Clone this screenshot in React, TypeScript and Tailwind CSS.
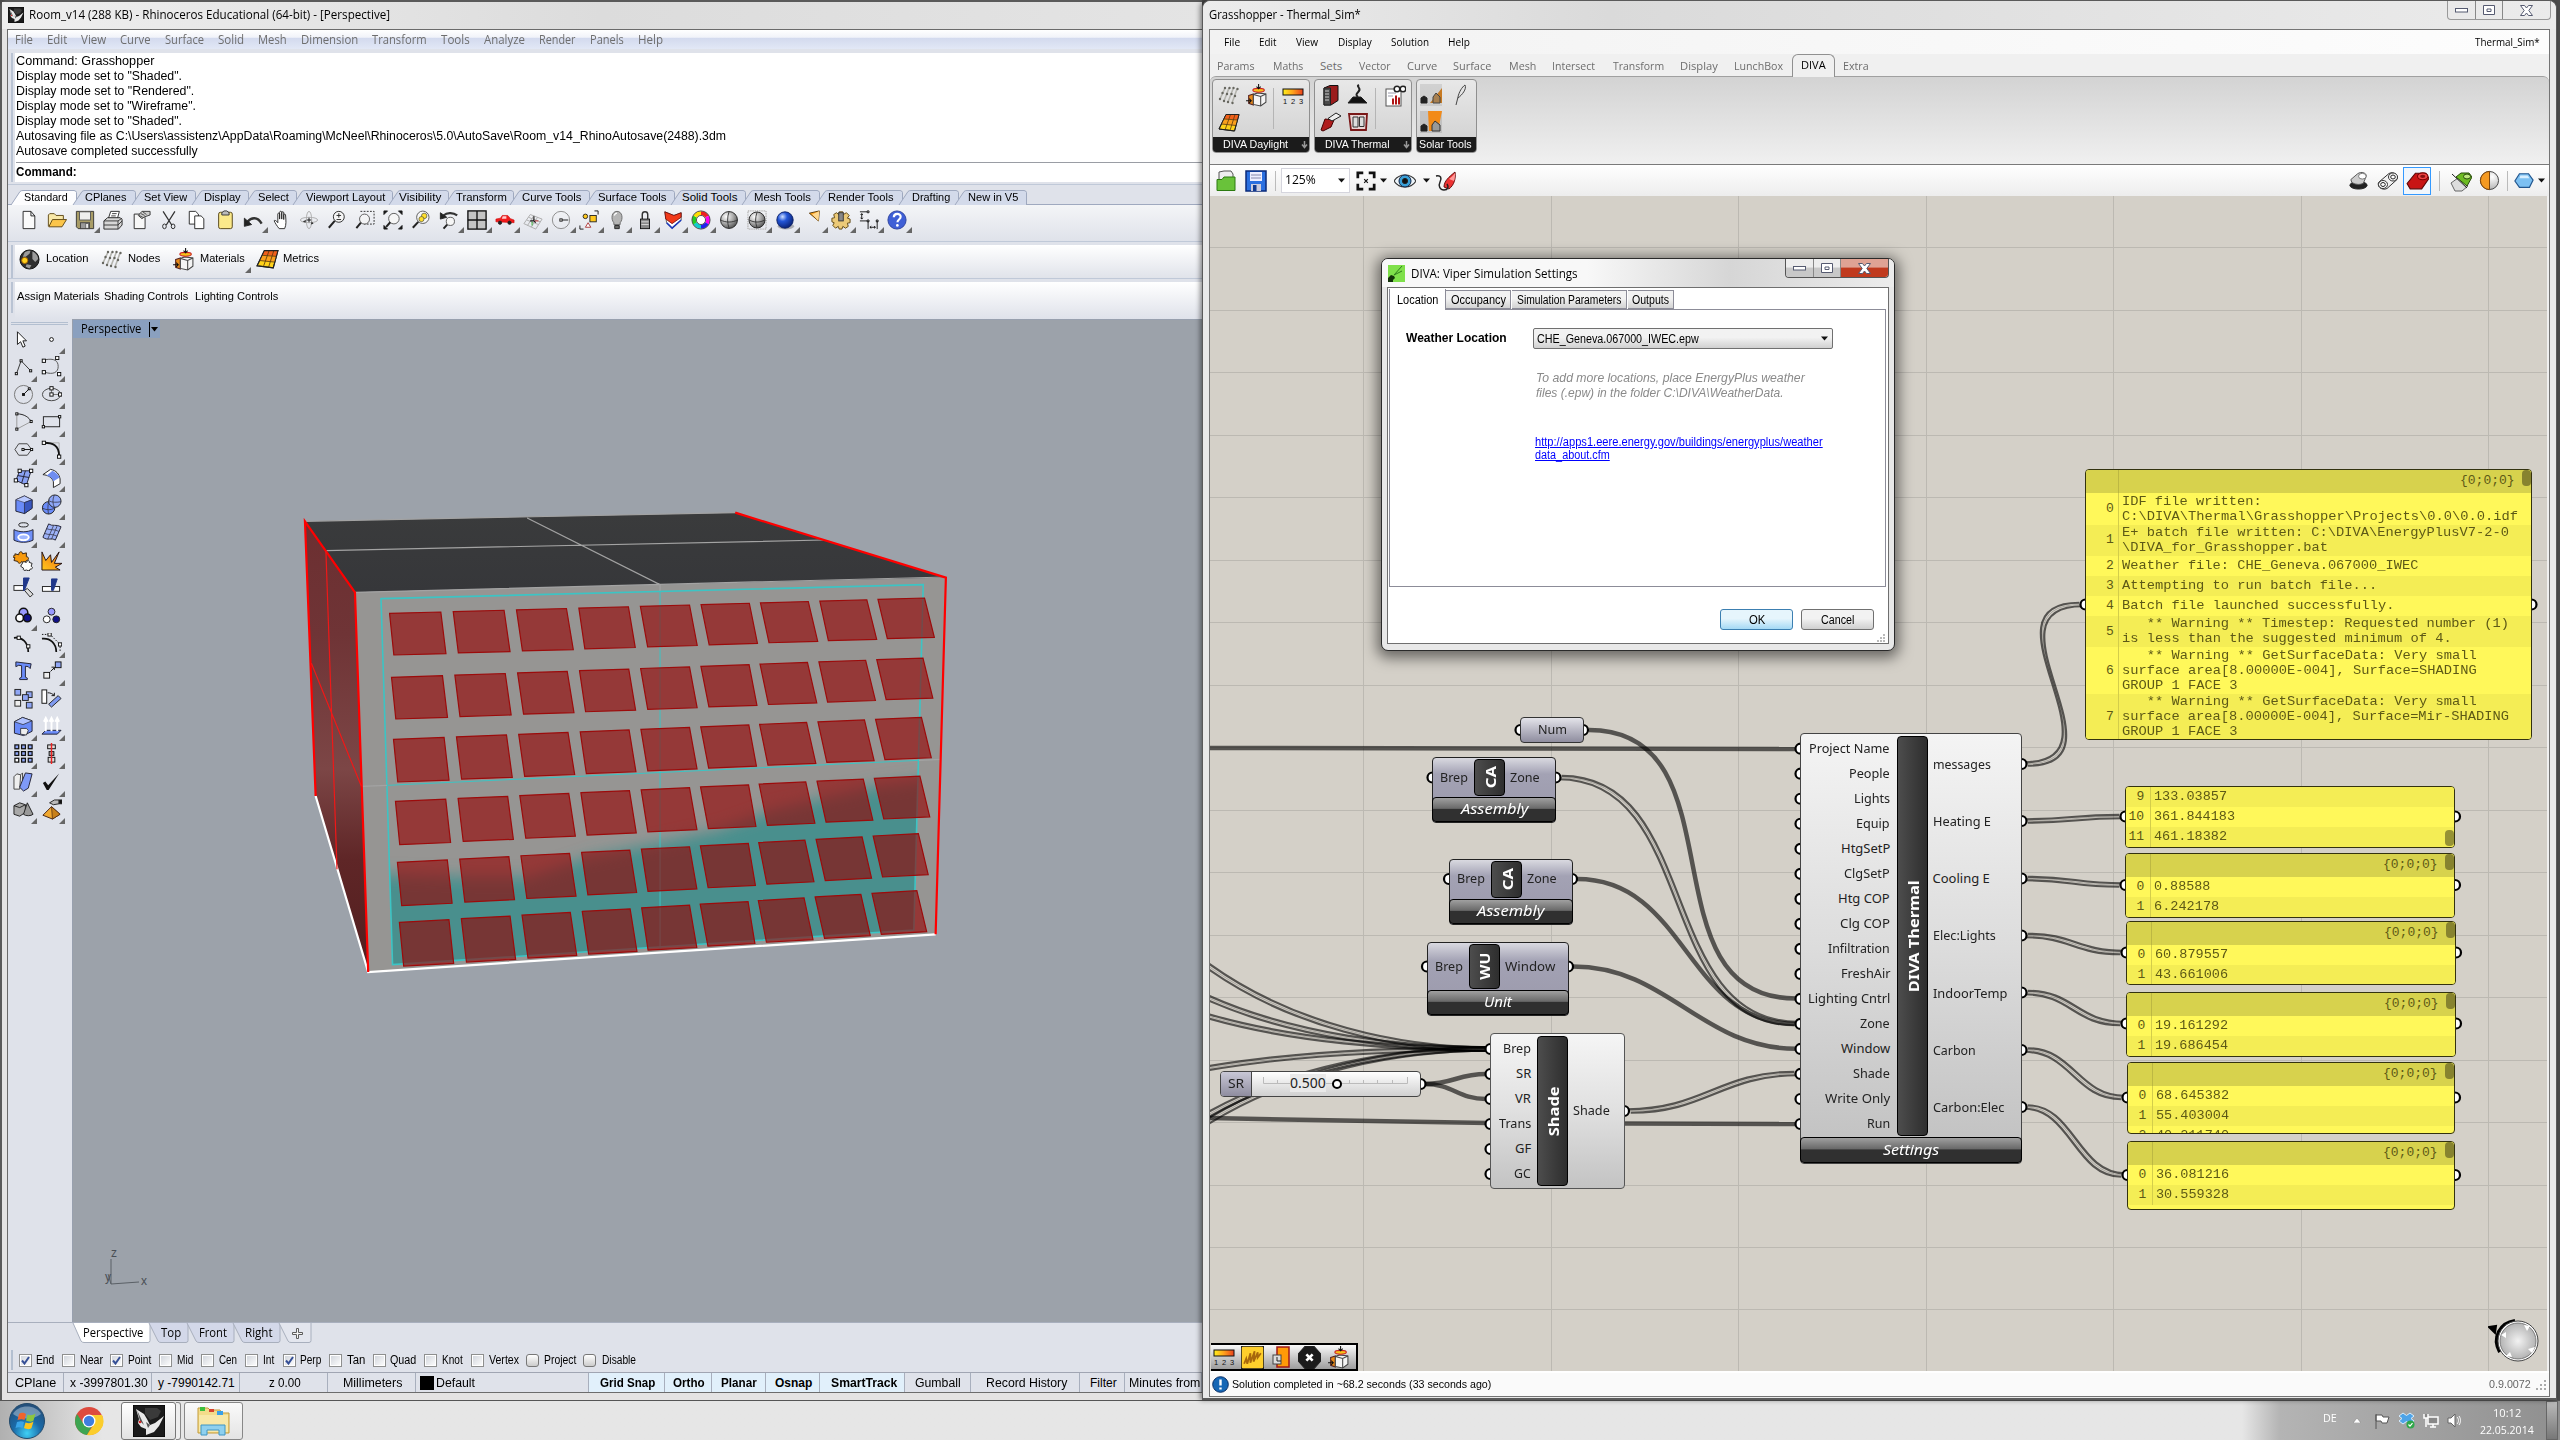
import React, { useLayoutEffect, useRef, useState } from "react";

const SANS = "font-['Liberation_Sans',sans-serif]";
const UI = "font-['Open_Sans','Noto_Sans',sans-serif]";
const NODE = "font-['Noto_Sans',sans-serif]";
const MONO = "font-['Liberation_Mono',monospace]";

/* Text fitted to a given advance width. */
function T({ w, children, className = "" }: { w: number; children: React.ReactNode; className?: string }) {
  const ref = useRef<HTMLSpanElement>(null);
  const [s, setS] = useState(1);
  useLayoutEffect(() => {
    if (ref.current) {
      const n = ref.current.offsetWidth;
      if (n > 0) setS(w / n);
    }
  }, [w]);
  return (
    <span className={"inline-block shrink-0 whitespace-pre text-left " + className} style={{ width: w }}>
      <span ref={ref} className="inline-block origin-left whitespace-pre" style={{ transform: `scaleX(${s})` }}>
        {children}
      </span>
    </span>
  );
}

type Item = [string, number, number];

/* A row of labels; each entry is [label, start, end]. */
function Labels({ items, from, className = "", itemClass = "" }: { items: Item[]; from: number; className?: string; itemClass?: string }) {
  return (
    <div className={"flex items-center " + className}>
      {items.map(([t, a, b], i) => (
        <span key={i} className={"flex shrink-0 " + itemClass} style={{ marginLeft: a - (i ? items[i - 1][2] : from) }}>
          <T w={b - a}>{t}</T>
        </span>
      ))}
    </div>
  );
}

function Ico({ n, s = 22, flyout = false, className = "" }: { n: string; s?: number; flyout?: boolean; className?: string }) {
  return (
    <span className={"relative flex shrink-0 items-center justify-center " + className}>
      <svg width={s} height={s} viewBox="0 0 22 22" fill="none" stroke="#222" strokeWidth="1">
        {G[n]}
      </svg>
      {flyout && (
        <svg className="absolute -bottom-[2px] right-0" width="6" height="6" viewBox="0 0 6 6">
          <path d="M6 0V6H0Z" fill="#666" />
        </svg>
      )}
    </span>
  );
}

const sq = (x: number, y: number, f = "#fff", s = 3.4) => <rect x={x - s / 2} y={y - s / 2} width={s} height={s} fill={f} stroke="#111" />;

const G: Record<string, React.ReactNode> = {
  doc: <path d="M3.500 1.500h10l5 5v14h-15zM13.500 1.500v5h5" fill="#fafafa" stroke="#111" transform="translate(1.500 0) scale(.86 1)" />,
  open: (
    <>
      <path d="M1.500 18V5.500L3 4h5l2 2h8v4" fill="#f8e8a8" stroke="#5b4310" />
      <path d="M2 18.500 6 10.500h15.500l-5 8z" fill="#fbc54a" stroke="#5b4310" />
    </>
  ),
  save: (
    <>
      <path d="M1.500 1.500h19v19h-17l-2-2z" fill="#a89c66" stroke="#333" />
      <rect x="5" y="2" width="12" height="9" fill="#eee" stroke="#555" />
      <rect x="6" y="14" width="10" height="6.500" fill="#999" stroke="#444" />
      <rect x="12" y="15" width="2.500" height="5" fill="#fff" stroke="#333" strokeWidth=".6" />
    </>
  ),
  print: (
    <>
      <path d="M6 9 8.500 1.500h9.500L16 9z" fill="#fff" />
      <path d="M1 12 5 8.500h14l2 2v6l-4 4.500H1z" fill="#d6d6d6" />
      <path d="M1 12h15.500L21 9M1 16.500h15.500L21 12M16.500 12v9M10 4h5M9 6.500h5" stroke="#333" />
    </>
  ),
  props: (
    <>
      <path d="M3.500 4.500h8l4 4v12h-12z" fill="#f7f7f7" />
      <path d="M8 6 12 1.500h9v4l-6 2-3 2z" fill="#ccc" stroke="#333" />
      <path d="M9 6l4 2M11 4l4 2M13 2l4 3" stroke="#444" />
    </>
  ),
  cut: (
    <>
      <path d="M4.500 1.500 14 16.500M17.500 1.500 8 16.500" stroke="#333" strokeWidth="1.400" />
      <ellipse cx="6" cy="18" rx="2" ry="2.600" />
      <ellipse cx="15.500" cy="18" rx="2" ry="2.600" />
    </>
  ),
  copy: (
    <>
      <path d="M2.500 1.500h7l3 3v11h-10z" fill="#fff" />
      <path d="M8.500 6.500h7l3 3v11h-10z" fill="#fff" />
    </>
  ),
  paste: (
    <>
      <rect x="4" y="2.500" width="15" height="18" rx="2" fill="#fbe98a" stroke="#4d3d10" />
      <path d="M7.500 5.500V3L10 1h3l2.500 2v2.500z" fill="#bbb" stroke="#333" />
    </>
  ),
  undo: (
    <>
      <path d="M5 13c4-5 11-6 15.500 2" fill="none" stroke="#333" strokeWidth="2.600" />
      <path d="M1.500 9v9l8-2z" fill="#222" />
    </>
  ),
  hand: (
    <path
      d="M7 20.500C4 17 2.500 14 1.500 12c0-1 2-1 4 2V4.500c0-1.500 2-1.500 2 0V10 2.500c0-1.500 2.300-1.500 2.300 0V10 3c0-1.500 2.200-1.500 2.200 0v7.500V5.500c0-1.300 2-1.300 2 0C14.500 12 15 16 13 20.500z"
      fill="#fff"
      transform="translate(2 0)"
    />
  ),
  rot: (
    <>
      <ellipse cx="11" cy="11" rx="9.500" ry="3" stroke="#aaa" />
      <ellipse cx="11" cy="11" rx="3" ry="9.500" stroke="#aaa" />
      <path d="M11 8.500v5M8.500 11h5" stroke="#111" />
      <path d="M7 14l-3-1.500L8 11zM13 16l3-1-2-2.500z" fill="#333" stroke="none" />
    </>
  ),
  zoom: (
    <>
      <circle cx="13" cy="7.500" r="6" fill="#f6f6f6" />
      <path d="M8.500 12 2 19.500" strokeWidth="2.200" />
      <path d="M10.500 6h5M13 3.500v5M10.500 10.500h5" />
    </>
  ),
  zoomw: (
    <>
      <path d="M6 1.500h15v14H10" strokeDasharray="2 1.500" />
      <circle cx="10.500" cy="10" r="5.500" fill="#f6f6f6" fillOpacity=".7" stroke="#555" />
      <path d="M6.500 14 1.500 20" strokeWidth="2.200" />
    </>
  ),
  zoome: (
    <>
      <path d="M1 1h4L1 5zM21 1h-4l4 4zM1 21h4l-4-4zM21 21h-4l4-4z" fill="#111" />
      <circle cx="12" cy="9.500" r="5.800" fill="#f6f6f6" stroke="#555" />
      <path d="M8 13.500 3.500 18.500" strokeWidth="2.200" />
    </>
  ),
  zooms: (
    <>
      <circle cx="13" cy="8" r="6.800" fill="#f6f6f6" stroke="#555" />
      <circle cx="14.500" cy="6.500" r="3" fill="#ffdf2c" stroke="#554" strokeWidth=".8" />
      <circle cx="11.500" cy="10" r="2.800" fill="#ffdf2c" stroke="#554" strokeWidth=".8" />
      <path d="M8 13 2 19.500" strokeWidth="2.200" />
    </>
  ),
  zoomu: (
    <>
      <path d="M5 6c4-4 11-3 15 0" stroke="#333" strokeWidth="2.400" />
      <path d="M1.500 3v7l7-2z" fill="#222" />
      <circle cx="12.500" cy="12.500" r="4.500" fill="#f6f6f6" stroke="#555" />
      <path d="M9 16 5 20.500" strokeWidth="2.200" />
    </>
  ),
  four: (
    <>
      <rect x="1" y="1" width="20" height="20" fill="#c4c4c4" stroke="#111" strokeWidth="1.500" />
      <path d="M11 1v20M1 11h20" stroke="#111" strokeWidth="1.500" />
    </>
  ),
  car: (
    <>
      <path d="M1 13V10l5-1 2-3h6l3 3.500 4 1.500v3z" fill="#f01c1c" stroke="#c00" strokeWidth=".6" />
      <path d="M8.500 7h4v2.500h-5z" fill="#fcc" stroke="none" />
      <circle cx="5.500" cy="14" r="1.800" fill="#222" />
      <circle cx="16" cy="14" r="1.800" fill="#222" />
    </>
  ),
  grid: (
    <>
      <path d="M1 15 8 5l13 5-7 11zM4 11l13 5M6 8l13 5M5 17 12 6M9 19l7-11" stroke="#aaa" />
      <path d="M8 12h4v-5M12 12l2 2" stroke="#111" strokeWidth="1.200" />
      <path d="M13 12h4" stroke="#b22" />
      <path d="M10 13v4" stroke="#2a2" />
    </>
  ),
  circ: (
    <>
      <circle cx="11" cy="11" r="9.500" stroke="#888" />
      <path d="M11 11h8" stroke="#111" />
      {sq(11, 11, "#fff", 2.500)}
    </>
  ),
  selobj: (
    <>
      <path d="M17 1h4v4M5 21H1v-4" stroke="#111" />
      <rect x="12" y="6" width="7" height="7" fill="#ffc81c" />
      <circle cx="7" cy="7" r="2.500" fill="#ffc81c" />
      <path d="M10 14l3 5H7z" fill="#fff" stroke="#a33" />
    </>
  ),
  bulb: (
    <>
      <path d="M7.500 14C4 10 5 1.500 11 1.500S18 10 14.500 14v2h-7z" fill="#b5b5b5" stroke="#666" />
      <path d="M8.500 17h5v3.500h-5z" fill="#666" />
      <path d="M8 6c.5-1.500 1.500-2.500 3-2.500" stroke="#fff" strokeWidth="1.500" />
    </>
  ),
  lock: (
    <>
      <path d="M8 10V5c0-4 6-4 6 0v5" stroke="#333" strokeWidth="1.600" />
      <rect x="6" y="10" width="10" height="10.500" fill="#888" stroke="#111" />
      <path d="M7 13h8M7 16h8" stroke="#ddd" />
    </>
  ),
  layer: (
    <>
      <path d="M2 2 12 6l8-3v8L10 20 4 14z" fill="#fff" stroke="#333" strokeWidth=".8" />
      <path d="M2 2 12 6l8-3v5l-10 7-7-5z" fill="#f03a1a" stroke="#600" strokeWidth=".8" />
      <path d="M4 14l6 6 10-9" stroke="#1b39b7" strokeWidth="1.800" />
    </>
  ),
  wheel: (
    <g fill="none" strokeWidth="4.500">
      <path d="M11 3.500A7.500 7.500 0 0 1 17.500 7.200" stroke="#e22" />
      <path d="M17.500 7.200a7.500 7.500 0 0 1 0 7.500" stroke="#f0e" />
      <path d="M17.500 14.700A7.500 7.500 0 0 1 11 18.500" stroke="#22e" />
      <path d="M11 18.500a7.500 7.500 0 0 1-6.500-3.800" stroke="#1cc" />
      <path d="M4.500 14.700a7.500 7.500 0 0 1 0-7.500" stroke="#2c2" />
      <path d="M4.500 7.200A7.500 7.500 0 0 1 11 3.500" stroke="#fd0" />
      <circle cx="11" cy="11" r="10" stroke="#444" strokeWidth="1" />
      <circle cx="11" cy="11" r="5" stroke="#444" strokeWidth="1" fill="#fff" />
    </g>
  ),
  ball: (
    <>
      <circle cx="11" cy="11" r="9.300" fill="url(#gBall)" stroke="#222" />
      <path d="M2 11c5 3 13 3 18 0M11 2c-2 6-2 12 0 18" stroke="#333" />
    </>
  ),
  balld: (
    <>
      <path d="M1 1h20v20H1z" stroke="#bbb" strokeDasharray="1 1" strokeWidth="2" />
      <circle cx="11" cy="11" r="8.800" fill="url(#gBall)" stroke="#222" />
      <path d="M2.500 11c5 3 12 3 17 0M11 2.500c-2 6-2 11 0 17" stroke="#333" />
    </>
  ),
  blue: (
    <>
      <ellipse cx="12" cy="18" rx="9" ry="3.500" fill="#000" fillOpacity=".25" stroke="none" />
      <circle cx="11" cy="11" r="9" fill="url(#gBlue)" stroke="#0a1f66" />
    </>
  ),
  cone: (
    <>
      <path d="M7 3.500 18 1l-1 11z" fill="#ffa41c" stroke="#503000" />
      <path d="M18 1 10 5l7 7" fill="#ffd890" stroke="none" />
    </>
  ),
  gear: (
    <>
      <path d="M9 2h4l.5 3L17 3l3 3-2 3 3 1v4l-3 .5 1 3.500-3 2-3-2-1 3H9l-1-3-3 2-3-3 1.500-3L1 13V9l3-.5L3 5l3-2 2.500 2z" fill="#ecca78" stroke="#5b420c" />
      <rect x="8.500" y="3" width="5" height="9" fill="#888" stroke="#333" />
    </>
  ),
  dims: (
    <path d="M1 2h8M1 12h8M3 4v6M1.800 5.500 3 4l1.200 1.500M1.800 8.500 3 10l1.200-1.500M10 12v9M20 12v9M12 19h6M13.500 17.800 12 19l1.500 1.200M16.500 17.800 18 19l-1.500 1.200M9 1h2v2H9zM9 11h2v2H9zM19 11h2v2h-2z" stroke="#111" />
  ),
  help: (
    <>
      <circle cx="11" cy="11" r="10" fill="#3f5fd6" stroke="#2a3f9c" />
      <path d="M7.500 8c0-5 7.500-5 7.500-.5 0 3-3.500 3-3.500 6" stroke="#fff" strokeWidth="2.400" />
      <circle cx="11.400" cy="17" r="1.500" fill="#fff" stroke="none" />
    </>
  ),
  globe: (
    <>
      <circle cx="11" cy="11" r="10" fill="#2f2f2f" stroke="#111" />
      <path d="M6 3.500C8 2 10 1.500 12 2l-1 3-4 3-3 0zM14 2.500c4 1.500 6 5 6 8l-3 3-3-3 0-4zM8 16l5 1-2 3.500-4-2z" fill="#9b9b9b" stroke="none" />
      <circle cx="6" cy="12" r="3.200" fill="#ffd21c" stroke="#a60" />
    </>
  ),
  nodes: (
    <>
      <path d="M2 15 7 4M6 17l5-13M10 18l5-13M14 19l5-14" stroke="#b4b4ae" strokeWidth="1.600" />
      <g fill="#66665f" stroke="none">
        <circle cx="7" cy="4" r="1.200" /><circle cx="11.500" cy="4" r="1.200" /><circle cx="15.500" cy="4" r="1.200" /><circle cx="19.500" cy="5" r="1.200" />
        <circle cx="4.500" cy="9" r="1.200" /><circle cx="9" cy="10" r="1.200" /><circle cx="13.500" cy="10" r="1.200" /><circle cx="17" cy="12" r="1.200" />
        <circle cx="2" cy="15" r="1.200" /><circle cx="6" cy="17" r="1.200" /><circle cx="10" cy="18" r="1.200" /><circle cx="14.500" cy="19" r="1.200" />
      </g>
    </>
  ),
  mat: (
    <>
      <path d="M3.500 11 8 9.500V20l-4.500-1.500z" fill="#e88a1a" stroke="#522" />
      <path d="M8 10l4-1.500 8 1v8L15 21l-7-1.500z" fill="#f4f4f4" stroke="#444" />
      <path d="M8 10l7 2 5-2.500M15 12v9" stroke="#444" />
      <ellipse cx="13" cy="6" rx="5.500" ry="1.800" fill="#f5c21a" stroke="#c22" />
      <path d="M13 0v5M11 2.500l2 2 2-2M1 16h5M4 14l2 2-2 2" stroke="#111" />
    </>
  ),
  met: (
    <>
      <path d="M8 2.500h13L16.500 19 1 17z" fill="#ffd21a" stroke="#222" />
      <path d="M8 2.500h13L19.500 8 6 7z" fill="#f2601a" stroke="none" />
      <path d="M6 7l13.500 1-1.500 5.500L3.500 12z" fill="#fba01c" stroke="none" />
      <path d="M6 7l13.500 1M3.500 12l14.500 1.500M12.500 2.500 7 18M17 2.500 12 18.500" stroke="#5a3a10" strokeWidth=".8" />
      <path d="M8 2.500h13L16.500 19 1 17z" stroke="#222" />
    </>
  ),
  arrow: <path d="M7 2v14l3.500-3 2.500 6 2.500-1.200L13 12h4z" fill="#fff" stroke="#111" transform="translate(-2 1) scale(.95)" />,
  pt: <circle cx="11" cy="11" r="2" fill="#fff" stroke="#111" />,
  poly: <>
    <path d="M3.500 19 8.500 5l10 10.500" stroke="#333" />{sq(3.500, 18.500, "#fff", 2.200)}{sq(8.500, 5, "#fff", 2.200)}{sq(18.500, 15.500, "#fff", 2.200)}
  </>,
  crv: <><path d="M4 4c10-2 14 1 14 7s-5 9-14 6" stroke="#555" />{sq(3, 5)}{sq(17, 2)}{sq(3, 17)}{sq(19, 19)}</>,
  cir2: <><circle cx="11" cy="11" r="9.500" stroke="#777" /><path d="M11 11l6-6" stroke="#111" />{sq(11, 11, "#fff", 2)}{sq(17, 5, "#fff", 2)}</>,
  ell: <><ellipse cx="11" cy="11" rx="9.500" ry="6.500" stroke="#444" /><path d="M11 4.500V11h9" stroke="#777" />{sq(11, 11)}{sq(11, 4.500)}{sq(20, 11)}</>,
  arc: <><path d="M4 3v16M4 19l15-8" stroke="#999" /><path d="M4 3c8 0 13 4 15 8" stroke="#222" />{sq(4, 3, "#fff", 2.200)}{sq(4, 19, "#fff", 2.200)}{sq(19, 11, "#fff", 2.200)}</>,
  rect: <><rect x="2.500" y="6" width="17" height="10.500" stroke="#222" />{sq(2.500, 16.500, "#fff", 2.400)}{sq(19.500, 6, "#fff", 2.400)}</>,
  hex: <><path d="M6 5h9l4.500 6-4.500 6H6L2 11z" stroke="#444" /><path d="M10.500 11h9" stroke="#111" />{sq(10.500, 11, "#fff", 2.200)}{sq(19.500, 11, "#fff", 2.200)}</>,
  fil: <><path d="M4 4h15v14" stroke="#aaa" /><path d="M3 4c9 0 16 2 16 14" stroke="#111" strokeWidth="2" />{sq(3, 4)}{sq(19, 18.500)}</>,
  srf: <><path d="M7 4h12l-5 15L3 14z" fill="#8aa2f5" stroke="#223" /><path d="M13 4l-4 13M5 9l12 2" stroke="#223" />{sq(7, 4)}{sq(19, 4)}{sq(3, 14)}{sq(14, 19)}</>,
  sweep: <><path d="M2 8 10 2.500c6 1 9 5 10 10v5l-7 4v-6c-1-4-5-7-11-7.500z" fill="#fff" /><path d="M6 9l6-5c4 2 6 4 7.500 7L13 15c-1-3-3-5-7-6z" fill="#6f8df0" stroke="none" /></>,
  box: <><path d="M3 6 12 2l8 4v9l-8 5.500L3 18z" fill="#6a8bf8" stroke="#223" /><path d="M3 6l9 3 8-3-8-4z" fill="#b9c9ff" stroke="#445" strokeWidth=".7" /><path d="M12 9v11.500l8-5.500V6z" fill="#3a57c0" stroke="#223" strokeWidth=".7" /></>,
  sph2: <><circle cx="8" cy="14.500" r="6.500" fill="#6a8bf8" /><circle cx="14.500" cy="7.500" r="6.500" fill="#8fa8f8" /><path d="M8 7c3 2 9 2 13 1M14 1c-2 4-2 9 0 13M2 15c4 2 8 2 12 0M8 8c-1 4-1 9 0 13" stroke="#334" strokeWidth=".8" /></>,
  ring: <><ellipse cx="11" cy="3" rx="5" ry="2.200" /><path d="M1 8c6 3 14 3 20 0v11c-6 3-14 3-20 0z" fill="#7090f8" stroke="#223" /><ellipse cx="11" cy="16" rx="5.500" ry="3" fill="#9fb6ff" stroke="#fff" strokeWidth="2" /></>,
  patch: <><path d="M8 2c4 3 8 0 13 3l-6 14c-4-3-8 1-13-3z" fill="#9db2f8" stroke="#223" /><path d="M6 7c4 2 8 0 13 3M4 12c4 2 8 0 13 3M13 4 7 18M17 4l-6 14" stroke="#334" strokeWidth=".8" /></>,
  puz: <><path d="M2 4l4 1c0-4 4-4 4-1l4-1v4c3 0 3 4 0 4l-2 3-3-2c-1 3-4 2-4 0l-4-1 1-3C-1 8-1 6 2 6z" fill="#f79a0e" stroke="#321" /><path d="M11 12l3 1c1-3 4-2 3 0l3 1-1 3c2 1 2 3-1 3l-1 2-3-1c-2 1-4 0-3-2l-3-2z" fill="#fff" /></>,
  boom: <path d="M1 21V2l4 9L10 5l1 8 8-11-5 12 8 0-7 4 5 3z" fill="url(#gBoom)" stroke="#211" />,
  trim: <><rect x="1" y="9" width="10" height="5" fill="#fff" /><path d="M12 14l6 7 3-3-6-6z" fill="#ddd" /><path d="M11 1h6l-5 13h-1z" fill="#20378a" stroke="#20378a" /></>,
  split: <><rect x="1.500" y="10" width="18" height="5" fill="#fff" /><path d="M11 2h6l-4 12h-2z" fill="#20378a" stroke="#20378a" /></>,
  grp: <><circle cx="11" cy="8" r="4.500" fill="#99f" stroke="#111" strokeWidth="1.600" /><circle cx="7" cy="13.500" r="4" fill="#fff" stroke="#111" strokeWidth="1.600" /><circle cx="15" cy="13.500" r="4" fill="#118" stroke="#111" strokeWidth="1.600" /></>,
  ungrp: <><circle cx="11" cy="7" r="3.600" fill="#99f" /><circle cx="6" cy="15" r="3.600" fill="#fff" /><circle cx="16" cy="15" r="3.600" fill="#118" /></>,
  pedit: <><path d="M1 5c8-1 15 4 15 15" stroke="#111" strokeWidth="1.800" />{sq(6, 5)}{sq(16, 14)}</>,
  pcp: <><path d="M1 6c9-1 15 5 15 14" stroke="#111" strokeWidth="1.800" /><path d="M1 1.500h8M11 3l9 9v8" strokeDasharray="1.500 1.500" stroke="#111" />{sq(9, 1.500)}{sq(20, 12)}</>,
  text: <path d="M3 2l16 2-1 5-2-2-3-.5V18l2 1v1.500H7V19l2-1V6L6 5.500 3 7z" fill="#6a8bf8" stroke="#223" />,
  move: <><rect x="3" y="13" width="6" height="6" fill="#eee" stroke="#111" /><rect x="15" y="2" width="6" height="6" fill="#8fa6f5" stroke="#111" /><path d="M10 12l4-4M11 7.500h3v3" stroke="#111" /></>,
  arr: <><rect x="2" y="1.500" width="6" height="6" fill="#8fa6f5" /><rect x="14" y="4" width="6" height="6" fill="#8fa6f5" /><rect x="10" y="7" width="6" height="6" fill="#8fa6f5" /><rect x="2" y="13" width="6" height="6" fill="#eee" /><rect x="14" y="15" width="6" height="6" fill="#8fa6f5" /></>,
  rota: <><rect x="1" y="2" width="5" height="14" fill="#fff" stroke="#111" /><path d="M8 17 18 8l3 3-10 9z" fill="#7f9af0" /><path d="M7 5c3 0 5 1 7 3M11 8h3V5" stroke="#111" /></>,
  cage: <><path d="M1.500 6 10 1.500 20 5v11l-9 4.500L1.500 18z" fill="#6a8bf8" stroke="#223" /><path d="M1.500 6l9 3L20 5 10 1.500z" fill="#b0c2ff" strokeWidth=".7" /><path d="M8 13h6l2 2-2 5-6-1z" fill="#eee" strokeWidth=".8" /></>,
  ext: <><path d="M5 15h16l-4 4H1z" fill="#6a8bf8" stroke="#223" /><path d="M5 16V4M11 16V4M17 16V4M3 6l2-4 2 4M9 6l2-4 2 4M15 6l2-4 2 4" stroke="#fff" strokeWidth="2" /></>,
  arr9: <g stroke="#111" strokeWidth="1.300">{[2, 9, 16].map((x) => [2, 9, 16].map((y) => <rect key={x + "-" + y} x={x} y={y} width="4" height="4" fill={x === 2 && y === 16 ? "#fff" : "#8fa6f5"} />))}</g>,
  align: <><rect x="7" y="2" width="8" height="4" fill="#ddd" stroke="#111" /><rect x="8.500" y="9" width="5" height="4" fill="#aaa" stroke="#111" /><rect x="7.500" y="15" width="7" height="5" fill="#ddd" stroke="#111" /><path d="M11 0v22" stroke="#e22" strokeWidth="1.500" /></>,
  flow: <><path d="M1 6l3-3 4 1-1 15-6 0zM8 4l2-2v8" fill="#eee" stroke="#444" /><path d="M7 17 13 2l7 1-4 15-5 3z" fill="#7f9af8" stroke="#223" /></>,
  check: <path d="M2 12.500 4.500 11 7.500 15 19 2.500 8 20H6z" fill="#111" stroke="none" />,
  prim: <><path d="M1 7l6-3 6 2v8l-6 4-6-2z" fill="#a8a8a8" /><path d="M1 7l6 2 6-3" /><path d="M15 4l6 12c-2 2-8 2-10 0z" fill="#999" /></>,
  pyr: <><path d="M2 17 11 8l9 8-8 5z" fill="#f0a830" stroke="#421" /><path d="M11 8l1 13 8-5z" fill="#c8801a" stroke="#421" strokeWidth=".7" /><path d="M9 4l5-3 5 0v4l-6 1z" fill="#bbb" /><path d="M19 1h3v4h-3z" fill="#111" /></>,
  leg: (
    <>
      <rect x="1" y="4" width="20" height="6" fill="url(#gLeg)" stroke="#111" />
      <g className={SANS} fontSize="7.500" fill="#111" stroke="none"><text x="1" y="19">1</text><text x="9" y="19">2</text><text x="17" y="19">3</text></g>
    </>
  ),
  book: <><path d="M4 4 10 1.500h8v15l-7 4.500H4z" fill="#9b1c1c" stroke="#111" /><path d="M4 4h6.500v17H4z" fill="#4a4a4a" /><path d="M5 7h4M5 10h4M5 13h4M5 16h4" stroke="#ccc" /></>,
  smoke: <><path d="M1 19l5-6h8l6 6z" fill="#111" /><path d="M11 13c-5-4 4-5 1-9-1-2-2-2 0-3" stroke="#222" strokeWidth="2" /></>,
  rep: <><rect x="2" y="4" width="15" height="17" fill="#fff" stroke="#555" /><path d="M4 8h8M4 11h5" stroke="#99a" /><path d="M9 19.500v-6M12 19.500v-9M15 19.500v-7" stroke="#b01414" strokeWidth="2" /><circle cx="13" cy="4" r="2.800" fill="#fff" stroke="#222" strokeWidth="1.500" /><circle cx="19" cy="4" r="2.800" fill="#fff" stroke="#222" strokeWidth="1.500" /></>,
  dia: <><path d="M1 19 5 8l9 1-3 7-8 4z" fill="#b01c1c" stroke="#400" /><path d="M8 7.500 16 2l5 3-9 5z" fill="#eee" /></>,
  win: <><path d="M2 3h18l-1 16H4z" fill="#e9d5d5" stroke="#7a1818" strokeWidth="1.800" /><path d="M6 6h5v10H6zM12.500 6h4.500v9.500h-4.500z" fill="#ddd" stroke="#333" /></>,
  sol1: <><rect width="22" height="22" fill="#aaa" fillOpacity=".35" stroke="none" /><path d="M10 19 22 4v15z" fill="#c77a22" stroke="none" /><path d="M13 19v-6l3-4 4 4v6z" fill="#a88050" stroke="#444" /><path d="M1 19v-5l3-2 3 2v5z" fill="#222" /></>,
  sol2: <><rect width="22" height="22" fill="#aaa" fillOpacity=".5" stroke="none" /><path d="M8 0h14l-4 20h-9z" fill="#f28a18" stroke="none" /><path d="M12 20v-6l3-4 5 4v6z" fill="#999" stroke="#333" /><path d="M1 20v-5l3-2 3 2v5z" fill="#222" /></>,
  needle: <path d="M16 1c-3 2-6 7-7 12l-2 8M16 1c2 4-3 10-7 13" stroke="#444" />,
  gopen: <><path d="M4 12V2l5-1h7l2 3v5" fill="#eee" stroke="#555" /><path d="M2 9.500h5L9 7h11v13.500H2z" fill="#69c23a" stroke="#2c7a10" /></>,
  gsave: <><rect x="1" y="1" width="20" height="20" fill="#2a6fe0" stroke="#0a2a7a" strokeWidth="1.500" /><rect x="5" y="2" width="12" height="9" fill="#eef" stroke="none" /><path d="M6 5h10M6 8h10" stroke="#88a" /><rect x="6" y="14" width="10" height="7" fill="#ccd" stroke="none" /><rect x="8" y="15" width="3.500" height="6" fill="#123a90" stroke="none" /></>,
  fit: <><path d="M2 8V2h6M14 2h6v6M20 14v6h-6M8 20H2v-6" stroke="#111" strokeWidth="3" /><path d="M9 9l4 4M13 9l-4 4" stroke="#111" strokeWidth="1.300" /></>,
  eye: <><path d="M0 11C5 3 17 3 22 11 17 19 5 19 0 11z" fill="#eef6fb" stroke="#333" strokeWidth="1.200" /><circle cx="11" cy="11" r="6" fill="#3aa0d8" stroke="#124" /><circle cx="11" cy="11" r="2.600" fill="#111" /></>,
  brush: <><path d="M9 17c0-6 5-10 11-15 1 7-1 13-6 17z" fill="#e33" stroke="#611" /><path d="M14 9c2-2 4-3 6-6 0 3 0 5-1 8z" fill="#f99" stroke="none" /><path d="M1 6c5-1 6 2 4 6s0 8 4 8 5-3 3-6" stroke="#222" strokeWidth="1.500" /></>,
  tubg: <><ellipse cx="11" cy="16" rx="9" ry="4" fill="#222" /><path d="M3 10 10 4c4-3 10-1 9 3l-3 7c-4 2-9 1-12-1z" fill="#ccc" stroke="#555" /><ellipse cx="15" cy="6.500" rx="4" ry="3" fill="#fff" stroke="#777" /></>,
  tubw: <><path d="M2 12 12 3.500C16 1 22 5 20 9.500L10 18.500C5 21-1 16 2 12z" fill="#f2f2f2" stroke="#333" /><ellipse cx="6" cy="14.500" rx="4.500" ry="4" fill="#fff" stroke="#333" /><ellipse cx="16" cy="7" rx="4.500" ry="4" fill="#fff" stroke="#333" /><ellipse cx="16" cy="7" rx="2.300" ry="2" /><ellipse cx="6" cy="14.500" rx="2.300" ry="2" /></>,
  tubr: <><path d="M1 14 9 4h10l3 5-7 10H4z" fill="#c81414" stroke="#5a0808" /><ellipse cx="16" cy="7" rx="5" ry="3.300" fill="#e44" stroke="#700" /><ellipse cx="16" cy="7" rx="2.500" ry="1.500" fill="#811" stroke="none" /></>,
  tubgr: <><path d="M1 13 8 8l10 8-6 5H5z" fill="#ddd" stroke="#666" /><path d="M6 7 11 3h8l3 4-5 9z" fill="#6dbb22" stroke="#264a08" /><ellipse cx="17" cy="6.500" rx="3.500" ry="2.500" fill="#bde77d" stroke="#264a08" /><path d="M2 4l15 14" stroke="#222" /></>,
  half: <><circle cx="11" cy="11" r="9.500" fill="url(#gHalf)" stroke="#444" /><path d="M11 1.500a9.500 9.500 0 0 0 0 19z" fill="#f59a22" stroke="#7a4208" /></>,
  hexb: <><path d="M6 3h10l5 7-4 8H6l-5-7z" fill="#7cc0f2" stroke="#23578f" strokeWidth="1.300" /><path d="M7 5h8l2 3H6z" fill="#d6eeff" stroke="none" /></>,
  scrib: <><rect x="0" y="0" width="22" height="22" rx="2" fill="#ffcf2c" stroke="#222" strokeWidth="1.500" /><path d="M3 17l2-5 1 5 3-10v9l4-11-1 10 4-9v5l3-4" stroke="#a8680c" strokeWidth="1.700" /></>,
  door: <><rect x="7" y="1" width="12" height="20" fill="#ff9a08" stroke="#a01818" strokeWidth="1.500" /><rect x="3" y="9" width="8" height="9" fill="#ddd" stroke="#444" /><path d="M7 11v4h4" /></>,
  hexx: <><path d="M7 0h8l7 8v6l-7 8H7l-7-8V8z" fill="#1b1b1b" /><path d="M8 8l6 6M14 8l-6 6" stroke="#fff" strokeWidth="2.600" /></>,
};

function Defs() {
  return (
    <svg width="0" height="0" className="absolute">
      <defs>
        <radialGradient id="gBall" cx=".35" cy=".3" r=".8"><stop offset="0" stopColor="#fff" /><stop offset=".5" stopColor="#aaa" /><stop offset="1" stopColor="#444" /></radialGradient>
        <radialGradient id="gHalf" cx=".65" cy=".3" r=".8"><stop offset="0" stopColor="#fff" /><stop offset="1" stopColor="#aaa" /></radialGradient>
        <radialGradient id="gBlue" cx=".35" cy=".3" r=".8"><stop offset="0" stopColor="#cfe0ff" /><stop offset=".35" stopColor="#2456d8" /><stop offset="1" stopColor="#061a66" /></radialGradient>
        <linearGradient id="gBoom" x1="0" y1="1" x2="1" y2="0"><stop offset="0" stopColor="#ffc81c" /><stop offset="1" stopColor="#f06a12" /></linearGradient>
        <linearGradient id="gLeg"><stop offset="0" stopColor="#fff01c" /><stop offset=".5" stopColor="#ffa01c" /><stop offset="1" stopColor="#e8401c" /></linearGradient>
      </defs>
    </svg>
  );
}

/* ---------------------------------------------------------------- Rhino */

const RHINO_MENU: Item[] = [["File", 15, 33], ["Edit", 47, 67], ["View", 81, 106], ["Curve", 120, 151], ["Surface", 165, 204], ["Solid", 218, 244], ["Mesh", 258, 287], ["Dimension", 301, 358], ["Transform", 372, 427], ["Tools", 441, 470], ["Analyze", 484, 525], ["Render", 539, 576], ["Panels", 590, 624], ["Help", 638, 663]];
const HISTORY: [string, number][] = [["Command: Grasshopper", 138], ['Display mode set to "Shaded".', 166], ['Display mode set to "Rendered".', 178], ['Display mode set to "Wireframe".', 180], ['Display mode set to "Shaded".', 166], ["Autosaving file as C:\\Users\\assistenz\\AppData\\Roaming\\McNeel\\Rhinoceros\\5.0\\AutoSave\\Room_v14_RhinoAutosave(2488).3dm", 710], ["Autosave completed successfully", 182]];
/* label, tab left, tab right, text left, text right */
const TABS: [string, number, number, number, number][] = [["Standard", 15, 77, 24, 68], ["CPlanes", 77, 136, 85, 126], ["Set View", 136, 196, 144, 187], ["Display", 196, 249, 204, 241], ["Select", 249, 297, 258, 289], ["Viewport Layout", 297, 393, 306, 385], ["Visibility", 393, 449, 399, 441], ["Transform", 449, 514, 456, 507], ["Curve Tools", 514, 590, 522, 582], ["Surface Tools", 590, 675, 598, 666], ["Solid Tools", 675, 746, 682, 737], ["Mesh Tools", 746, 820, 754, 811], ["Render Tools", 820, 903, 828, 894], ["Drafting", 903, 959, 912, 950], ["New in V5", 959, 1027, 968, 1018]];
const TOOLS = ["doc", "open", "save*", "print", "props", "cut", "copy", "paste", "undo*", "hand", "rot", "zoom", "zoomw", "zoome", "zooms", "zoomu*", "four*", "car*", "grid*", "circ*", "selobj*", "bulb*", "lock*", "layer*", "wheel*", "ball", "balld*", "blue*", "cone*", "gear*", "dims*", "help*"];
const SIDE = ["arrow", "pt*", "poly*", "crv*", "cir2*", "ell*", "arc*", "rect*", "hex*", "fil*", "srf*", "sweep*", "box*", "sph2*", "ring*", "patch*", "puz", "boom", "trim", "split", "grp*", "ungrp", "pedit", "pcp*", "text", "move*", "arr", "rota", "cage*", "ext*", "arr9*", "align*", "flow*", "check*", "prim*", "pyr*"];
const OSNAPS: [string, number, number, number, boolean][] = [["End", 20, 37, 55, true], ["Near", 63, 81, 104, false], ["Point", 111, 129, 152, true], ["Mid", 160, 178, 194, false], ["Cen", 202, 220, 238, false], ["Int", 246, 264, 275, false], ["Perp", 284, 301, 322, true], ["Tan", 330, 348, 366, false], ["Quad", 374, 391, 417, false], ["Knot", 425, 443, 464, false], ["Vertex", 472, 490, 520, false], ["Project", 527, 545, 577, false], ["Disable", 584, 603, 637, false]];
/* label, cell left, cell right, text left, text right, bold */
const STATUS: [string, number, number, number, number, boolean][] = [["CPlane", 8, 64, 15, 56, false], ["x -3997801.30", 64, 152, 70, 148, false], ["y -7990142.71", 152, 240, 158, 235, false], ["z 0.00", 240, 328, 269, 301, false], ["Millimeters", 328, 416, 343, 402, false], ["Default", 416, 589, 436, 475, false], ["Grid Snap", 589, 665, 600, 655, true], ["Ortho", 665, 712, 673, 705, true], ["Planar", 712, 766, 721, 757, true], ["Osnap", 766, 820, 775, 812, true], ["SmartTrack", 820, 905, 831, 897, true], ["Gumball", 905, 971, 915, 961, false], ["Record History", 971, 1080, 986, 1067, false], ["Filter", 1080, 1125, 1090, 1117, false], ["Minutes from", 1125, 1202, 1129, 1200, false]];

function Building() {
  const L0 = [233, 382, 530, 676, 820, 962, 1101, 1240, 1376], L5 = [256, 401, 543, 684, 823, 960, 1096, 1229, 1362];
  const R0 = [353, 501, 647, 792, 935, 1075, 1213, 1350, 1485], R5 = [372, 515, 656, 796, 935, 1072, 1203, 1336, 1467];
  const BL0 = [243, 394, 544, 690, 837, 981, 1121, 1260, 1398], BL5 = [266, 413, 557, 699, 838, 978, 1115, 1251, 1384];
  const BR0 = [365, 515, 663, 808, 953, 1094, 1235, 1373, 1508], BR5 = [383, 528, 671, 812, 952, 1088, 1224, 1358, 1490];
  const ta = [340, 532, 718, 904, 1087, 1267], tb = [298, 479, 658, 835, 1008, 1180];
  const ba = [465, 657, 846, 1034, 1217, 1398], bb = [416, 599, 779, 957, 1131, 1303];
  const panes: string[] = [];
  for (let r = 0; r < 6; r++)
    for (let c = 0; c < 9; c++) {
      const m = (a: number, b: number) => a + ((b - a) * r) / 5;
      const t = ta[r] + ((tb[r] - ta[r]) * c) / 8, b = ba[r] + ((bb[r] - ba[r]) * c) / 8, d = 4 + r * 0.8;
      panes.push(`${m(L0[c], L5[c])},${t} ${m(R0[c], R5[c])},${t - d} ${m(BR0[c], BR5[c])},${b - d} ${m(BL0[c], BL5[c])},${b}`);
    }
  const v = { vectorEffect: "non-scaling-stroke" as const };
  return (
    <svg className="absolute inset-0" width="1129" height="1002" viewBox="73 320 1129 1002" fill="none">
      <defs>
        <linearGradient id="side" x1="0" y1="0" x2="0" y2="1"><stop offset="0" stopColor="#6c2f31" /><stop offset=".25" stopColor="#6f3436" /><stop offset=".55" stopColor="#7c4646" /><stop offset=".75" stopColor="#5f2627" /><stop offset="1" stopColor="#521e1e" /></linearGradient>
        <linearGradient id="roof" x1="0" y1="0" x2="0" y2="1"><stop offset="0" stopColor="#3a3b3c" /><stop offset="1" stopColor="#36373a" /></linearGradient>
        <filter id="soft" x="-10%" y="-20%" width="120%" height="140%"><feGaussianBlur stdDeviation="7 22" /></filter>
        <clipPath id="glass"><path d="M213 296 1482 254 1460 1290 240 1394z" /></clipPath>
      </defs>
      <g transform="translate(290 500) scale(.42729 .33333)">
        <path d="M35 64 152 277 183 1416 60 888z" fill="url(#side)" />
        <path d="M35 64 1042 38 1535 233 152 277z" fill="url(#roof)" />
        <path d="M152 277 1535 233 1511 1303 183 1416z" fill="#969593" />
        <g clipPath="url(#glass)"><path d="M180 1120 430 1130 560 1130 700 1070 860 1030 1000 990 1130 930 1360 860 1540 830V1500H180z" fill="#498f8d" filter="url(#soft)" /></g>
        <path d="M213 296 1482 254 1460 1290 240 1394z" stroke="#3cc4c4" strokeWidth="1.600" {...v} />
        <path d="M228 856 1472 781M866 272V1350" stroke="#3cc4c4" strokeWidth="1" {...v} />
        {panes.map((p, i) => <polygon key={i} points={p} fill="#940000" fillOpacity=".62" stroke="#9c0b0b" strokeWidth="1.200" {...v} />)}
        <path d="M35 64 1042 38M152 277 1535 231M84 152 1250 120M555 54 866 254V272M167 859l60-3M1472 781l50-3" stroke="#a3a3a3" strokeWidth="1.200" {...v} />
        <path d="M60 888 183 1416 1511 1303" stroke="#fff" strokeWidth="2.200" {...v} />
        <path d="M1042 38 1535 233 1511 1303M60 888 35 64 152 277 183 1416" stroke="#f00" strokeWidth="2.200" {...v} />
        <path d="M84 152 110 1108M50 490 167 859" stroke="#f01818" strokeWidth="1.200" {...v} />
      </g>
      <g stroke="#5a6066" strokeWidth="1">
        <path d="M111 1284V1259M111 1284l28-2M111 1284l-3-10" />
      </g>
      <g className={SANS} fontSize="12" fill="#4a4f55"><text x="111" y="1257">z</text><text x="141" y="1285">x</text><text x="105" y="1281">y</text></g>
    </svg>
  );
}

function Rhino() {
  return (
    <div className="relative flex h-[1400px] w-[1202px] shrink-0 flex-col rounded-tl-lg border-l-2 border-t-2 border-[#5a5a5a] bg-[#e4e3e3]">
      <div className={"flex h-[27px] shrink-0 items-center gap-[5px] bg-linear-to-r from-[#efefef] via-[#dcdcdc] to-[#e4e4e4] pl-[6px] pb-[1px] text-[12px] text-black " + UI}>
        <RhinoLogo s={16} />
        <T w={361}>Room_v14 (288 KB) - Rhinoceros Educational (64-bit) - [Perspective]</T>
      </div>
      <div className="ml-[5px] flex h-[1364px] flex-col border-l border-t border-[#6a6a6a] bg-[#dfe2ea]">
        <div className="h-[19px] shrink-0 border-b border-[#b4bccd] bg-linear-to-b from-white from-0% via-[#f3f5fa] via-35% to-[#dfe5f4] to-100%">
          <div className="mt-[1px] h-[18px] bg-linear-to-b from-transparent from-35% via-[#d3daee] via-40% to-[#e2e8f6]">
            <Labels from={8} className={"h-[18px] text-[12px] text-[#6e6e6e] " + UI} items={RHINO_MENU} />
          </div>
        </div>
        <div className="mt-[4px] flex h-[129px] shrink-0">
          <div className="mr-[2px] ml-[3px] w-[2px] border-x border-[#b9c3d3]" />
          <div className={"flex flex-1 flex-col bg-white pl-[1px] text-[12px] text-black " + SANS}>
            <div className="flex h-[110px] flex-col border-b border-[#9a9da4]">
              {HISTORY.map(([t, w], i) => <span key={i} className="h-[15px] leading-[16px]"><T w={w}>{t}</T></span>)}
            </div>
            <div className="h-[19px] font-bold leading-[18px]"><T w={61}>Command:</T></div>
          </div>
        </div>
        <div className="h-[3px] shrink-0 border-b border-[#c0c9d8]" />
        <div className="mt-[5px] flex h-[52px] shrink-0 flex-col border-b border-[#c0c9d8]">
          <div className="flex h-[15px] shrink-0 items-center border-b border-[#9fa9bf] pl-[7px]">
            {TABS.map(([t, a, b, c, d], i) => (
              <div key={t} className="relative flex h-[15px] shrink-0 items-center" style={{ width: b - a, paddingLeft: c - a }}>
                <svg className="absolute inset-0 overflow-visible" width={b - a} height="15">
                  <path d={`M-4 15 5 1.500Q6 .5 8 .5H${b - a - 3}q2 0 2.500 2V15`} fill={i ? "#d3daea" : "#fdfdfe"} stroke="#9fa9bf" />
                </svg>
                <T w={d - c} className={"relative text-[11.5px] leading-[15px] text-black " + SANS}>{t}</T>
              </div>
            ))}
          </div>
          <div className="flex h-[36px] items-center bg-linear-to-b from-[#f4f5f7] to-[#dfe2ea] pl-[8px] pb-[6px]">
            {TOOLS.map((t) => <Ico key={t} n={t.replace("*", "")} s={20} flyout={t.endsWith("*")} className="h-[22px] w-[28px] pr-[3px]" />)}
          </div>
        </div>
        <div className="mt-[3px] flex h-[34px] shrink-0 border-b border-[#c0c9d8]">
          <div className="mr-[2px] ml-[3px] w-[2px] border-x border-[#b9c3d3]" />
          <div className={"flex flex-1 items-center bg-linear-to-b from-white to-[#e0e3ea] pb-[5px] pl-[4px] text-[11.5px] " + SANS}>
            <Ico n="globe" s={21} /><T w={42} className="ml-[6px]">Location</T>
            <Ico n="nodes" s={22} className="ml-[13px]" /><T w={32} className="ml-[5px]">Nodes</T>
            <Ico n="mat" s={23} className="ml-[12px]" /><T w={45} className="ml-[5px]">Materials</T>
            <svg className="mt-[22px]" width="6" height="6"><path d="M6 0V6H0Z" fill="#666" /></svg>
            <Ico n="met" s={23} className="ml-[5px]" /><T w={36} className="ml-[4px]">Metrics</T>
          </div>
        </div>
        <div className="mt-[3px] flex h-[37px] shrink-0">
          <div className="mr-[2px] ml-[3px] h-[31px] w-[2px] border-x border-[#b9c3d3]" />
          <Labels from={15} items={[["Assign Materials", 17, 99], ["Shading Controls", 104, 188], ["Lighting Controls", 195, 278]]} className={"flex-1 bg-linear-to-b from-white to-[#dfe2ea] pb-[8px] text-[11.5px] " + SANS} />
        </div>
        <div className="flex h-[1003px] shrink-0">
          <div className="w-[64px] shrink-0">
            <div className="mt-[3px] mr-[4px] ml-[3px] h-[3px] border-y border-[#b3bfd0]" />
            <div className="mt-[1px] grid w-[57px] grid-cols-2 pl-[1px]">
              {SIDE.map((t) => <Ico key={t} n={t.replace("*", "")} s={21} flyout={t.endsWith("*")} className="mb-[1.66px] h-[26px] w-[28px]" />)}
            </div>
          </div>
          <div className="relative flex-1 border-l border-t border-[#98a0ae] bg-[#9ca2aa]">
            <Building />
            <div className={"relative flex h-[18px] w-[87px] items-center bg-[#8aa0bf] pl-[8px] text-[12px] text-black " + UI}>
              <T w={60}>Perspective</T>
              <span className="ml-[8px] h-[15px] w-px bg-black" />
              <svg className="ml-[1px]" width="7" height="5"><path d="M0 0h7L3.500 4.500z" fill="#000" /></svg>
            </div>
          </div>
        </div>
        <div className={"flex h-[20px] shrink-0 border-t border-[#a8afbd] pl-[65px] text-[12px] text-black " + UI}>
          {([["Perspective", 73, 150, 83, 143], ["Top", 150, 188, 161, 181], ["Front", 188, 234, 199, 227], ["Right", 234, 280, 245, 273], ["", 280, 311, 290, 305]] as [string, number, number, number, number][]).map(([t, a, b, c, d], i) => (
            <div key={i} className="relative flex h-[20px] items-center" style={{ width: b - a, paddingLeft: c - a }}>
              <svg className="absolute inset-0 overflow-visible" width={b - a} height="20">
                <path d={`M${i ? -1 : 0} 0l${i ? 9 : 8} 18q1 1.500 3 1.500H${b - a - 2}q2 0 2-2V0`} fill={i === 0 ? "#fff" : i === 4 ? "#e3e6ee" : "#d3d8e9"} stroke="#a8afbd" />
                {i === 4 && <path d="M16.500 5.500h2v4h4v2h-4v4h-2v-4h-4v-2h4z" fill="#f4f4f4" stroke="#5c5c5c" />}
              </svg>
              {t && <T w={d - c} className="relative">{t}</T>}
            </div>
          ))}
        </div>
        <div className={"mt-[7px] flex h-[22px] shrink-0 items-center text-[12px] text-black " + SANS}>
          <span className="ml-[3px] h-[20px] w-[2px] border-x border-[#b3bfd0]" />
          {OSNAPS.map(([t, a, b, c, on], i) => (
            <React.Fragment key={t}>
              <span className={"flex size-[13px] shrink-0 items-center justify-center border " + (i > 10 ? "rounded-[3px] border-[#777] bg-linear-to-b from-white to-[#ccc]" : "border-[#8e8f8f] bg-linear-to-br from-[#cfd3da] to-white outline-1 -outline-offset-2 outline-white")} style={{ marginLeft: a - (i ? OSNAPS[i - 1][3] : 14) }}>
                {on && <svg width="9" height="9" viewBox="0 0 9 9"><path d="M1 4.500 3.500 7.500 8 1" fill="none" stroke="#354f96" strokeWidth="2" /></svg>}
              </span>
              <span className="flex" style={{ marginLeft: b - a - 13 }}><T w={c - b}>{t}</T></span>
            </React.Fragment>
          ))}
        </div>
        <div className={"mt-[1px] flex h-[21px] shrink-0 border-y border-[#a0a5b2] border-b-[#6c6c6c] text-[12px] text-black " + SANS}>
          {STATUS.map(([t, a, b, c, d, bold]) => (
            <div key={t} className={"flex h-[19px] shrink-0 items-center border-r border-[#a8afbd] " + (bold ? "bg-[#e1f0fb] font-bold" : "")} style={{ width: b - a, paddingLeft: t === "Default" ? 4 : c - a }}>
              {t === "Default" && <span className="mr-[2px] size-[14px] bg-black" />}
              <T w={d - c}>{t}</T>
            </div>
          ))}
        </div>
      </div>
    </div>
  );
}

function RhinoLogo({ s }: { s: number }) {
  return (
    <svg width={s} height={s} viewBox="0 0 32 32" className="shrink-0">
      <rect width="32" height="32" fill="#1b1b1b" stroke="#000" />
      <path d="M3 4 6 14l-1 4 3 4 5 2 0 6 8-3 5-6 5-10-9 7-5 2-3-6-3-5z" fill="#e9e9e9" />
      <path d="M12 3h12l4 3-3 6-8 3-5-6z" fill="#3a3a3a" />
      <path d="M4 5l7 15-4-4zM13 17l4 3-2 3z" fill="#555" />
      <circle cx="7" cy="17" r="1.300" fill="#d22" />
    </svg>
  );
}

/* ---------------------------------------------------------- Grasshopper */

const GH_MENU: Item[] = [["File", 1224, 1240], ["Edit", 1259, 1276], ["View", 1296, 1318], ["Display", 1338, 1372], ["Solution", 1391, 1429], ["Help", 1448, 1470]];
const GH_TABS: Item[] = [["Params", 1217, 1255], ["Maths", 1273, 1303], ["Sets", 1320, 1342], ["Vector", 1359, 1391], ["Curve", 1407, 1437], ["Surface", 1453, 1491], ["Mesh", 1509, 1536], ["Intersect", 1552, 1595], ["Transform", 1613, 1664], ["Display", 1680, 1718], ["LunchBox", 1734, 1783]];
const INPUTS: [string, number][] = [["Project Name", 81], ["People", 41], ["Lights", 36], ["Equip", 34], ["HtgSetP", 49], ["ClgSetP", 46], ["Htg COP", 52], ["Clg COP", 50], ["Infiltration", 62], ["FreshAir", 49], ["Lighting Cntrl", 82], ["Zone", 30], ["Window", 49], ["Shade", 37], ["Write Only", 65], ["Run", 23]];
const OUTPUTS: [string, number, number][] = [["messages", 764, 58], ["Heating E", 821, 58], ["Cooling E", 878.5, 57], ["Elec:Lights", 935.5, 63], ["IndoorTemp", 992.5, 74], ["Carbon", 1050, 43], ["Carbon:Elec", 1107, 71]];

function Wire({ p, double = false, down = true }: { p: string; double?: boolean; down?: boolean }) {
  if (!double) return <path d={p} stroke="#000" strokeOpacity=".6" strokeWidth="4.500" />;
  const k = down ? -1.500 : 1.500;
  return (
    <g stroke="#000" strokeOpacity=".6" strokeWidth="2.200">
      <path d={p} transform={`translate(1.700 ${k * 1.150})`} />
      <path d={p} transform={`translate(-1.700 ${-k * 1.150})`} />
      <path d={p} strokeWidth="1" strokeOpacity=".2" />
    </g>
  );
}

const bez = (x1: number, y1: number, x2: number, y2: number, d: number) => `M${x1} ${y1}C${x1 + d} ${y1} ${x2 - d} ${y2} ${x2} ${y2}`;

const PANELS: { x: number; r: number; y: number; b: number; head: boolean; g: number; rows: [string, string][] }[] = [
  { x: 2125, r: 2455, y: 786, b: 848, head: false, g: 816.5, rows: [["9", "133.03857"], ["10", "361.844183"], ["11", "461.18382"]] },
  { x: 2125, r: 2455, y: 853, b: 917.5, head: true, g: 885, rows: [["0", "0.88588"], ["1", "6.242178"]] },
  { x: 2126, r: 2456, y: 921, b: 985, head: true, g: 952.5, rows: [["0", "60.879557"], ["1", "43.661006"]] },
  { x: 2126, r: 2456, y: 991.5, b: 1056.5, head: true, g: 1023.5, rows: [["0", "19.161292"], ["1", "19.686454"]] },
  { x: 2127, r: 2455, y: 1062, b: 1133.5, head: true, g: 1097.5, rows: [["0", "68.645382"], ["1", "55.403004"], ["2", "40.211740"]] },
  { x: 2127, r: 2455, y: 1141, b: 1210, head: true, g: 1175, rows: [["0", "36.081216"], ["1", "30.559328"]] },
];

const LOG: [string, number, string[]][] = [
  ["0", 31.5, ["IDF file written:", "C:\\DIVA\\Thermal\\Grasshopper\\Projects\\0.0\\0.0.idf"]],
  ["1", 31, ["E+ batch file written: C:\\DIVA\\EnergyPlusV7-2-0", "\\DIVA_for_Grasshopper.bat"]],
  ["2", 20.500, ["Weather file: CHE_Geneva.067000_IWEC"]],
  ["3", 19.500, ["Attempting to run batch file..."]],
  ["4", 20.500, ["Batch file launched successfully."]],
  ["5", 31, ["   ** Warning ** Timestep: Requested number (1)", "is less than the suggested minimum of 4."]],
  ["6", 46.500, ["   ** Warning ** GetSurfaceData: Very small", "surface area[8.00000E-004], Surface=SHADING", "GROUP 1 FACE 3"]],
  ["7", 45.500, ["   ** Warning ** GetSurfaceData: Very small", "surface area[8.00000E-004], Surface=Mir-SHADING", "GROUP 1 FACE 3"]],
];

const panelBox = "absolute flex flex-col overflow-hidden rounded-[4px] border-[1.5px] border-[#33320f] bg-[#fff85a] text-[13px] text-[#5d5916] " + MONO;

function PanelHead({ h, div }: { h: number; div: number }) {
  return (
    <div className="flex shrink-0 items-center bg-[#d7d24d]" style={{ height: h }}>
      <span className="h-full border-r border-[#bdb843]" style={{ width: div }} />
      <span className="flex-1" />
      <T w={55} className="mr-[7px] -mt-[1px]">{"{0;0;0}"}</T>
      <span className="h-[16px] w-[9px] self-start rounded-[4px] bg-[#87832f]" />
    </div>
  );
}

function Canvas() {
  const grips: [number, number][] = [[1520.5, 730], [1583, 730], [1432.5, 777.500], [1555.5, 777.500], [1449, 879], [1572, 879], [1427, 966.500], [1568, 966.500], [1420.5, 1084], [1624, 1111], [2085.5, 604.500], [2531.5, 604.500]];
  for (let i = 0; i < 6; i++) grips.push([1490.5, 1049 + 25 * i]);
  for (let i = 0; i < 16; i++) grips.push([1800.5, 748.700 + 25.02 * i]);
  OUTPUTS.forEach(([, y]) => grips.push([2021.5, y]));
  PANELS.forEach((p) => grips.push([p.x + 0.5, p.g], [p.r, p.g]));
  const vs = [1363.5, 1551.5, 1738.5, 1926.5, 2113.5, 2301.5, 2488.5];
  const hs = Array.from({ length: 18 }, (_, k) => Math.round(247.3 + 62.48 * k) + 0.5);
  const brep: [number, boolean][] = [[968, true], [1001, true], [1020, true], [1066, false], [1114, false], [1121, false]];
  return (
    <div className="relative h-[1175px] w-[1337px] shrink-0 overflow-hidden bg-[#d4d0c8]">
      <div className="absolute -left-[1210px] -top-[196px] h-[1440px] w-[2560px]">
        <svg className="absolute inset-0" width="2560" height="1440" fill="none">
          <g stroke="#bcb9b2">
            {vs.map((x) => <path key={x} d={`M${x} 196V1371`} />)}
            {hs.map((y) => <path key={y} d={`M1210 ${y}H2548`} />)}
          </g>
          <Wire p="M1205 748 1796 749" />
          <Wire p="M1205 1118 1488 1123" /><Wire p="M1624 1123.5 1796 1124" />
          {brep.map(([y, d]) => <Wire key={y} double down={d} p={`M1204 ${y + (d ? -5 : 3)}C1290 ${y + (1049 - y) * 0.72} 1400 1049 1488 1049`} />)}
          <Wire p={bez(1589, 730, 1796, 998.500, 155)} />
          <Wire double p={bez(1560, 777.500, 1796, 1023.500, 140)} />
          <Wire p={bez(1577, 879, 1796, 1024, 110)} />
          <Wire p={bez(1573, 966.500, 1796, 1048.700, 95)} />
          <Wire double down={false} p={bez(1629, 1111, 1796, 1073.500, 75)} />
          <Wire p={bez(1425, 1084, 1486, 1074, 28)} /><Wire p={bez(1425, 1084, 1486, 1099, 28)} />
          <Wire double down={false} p={bez(2026, 764, 2081, 604.500, 105)} />
          {PANELS.map((p, i) => <Wire key={i} double down={i > 0} p={bez(2026, OUTPUTS[i + 1][1], p.x - 4, p.g, 46)} />)}
          {grips.map(([x, y], i) => <circle key={i} cx={x} cy={y} r="5" fill="#fff" stroke="#000" strokeWidth="2.200" />)}
        </svg>

        {/* parameter and component capsules */}
        <div className={"absolute left-[1520px] top-[717px] flex h-[26px] w-[64px] items-center justify-center rounded-[4px] border-[1.5px] border-[#333] bg-linear-to-b from-[#e4e4ea] to-[#8f8d9f] text-[13px] text-[#222] " + NODE}><T w={29}>Num</T></div>
        <Small x={1432} y={757} w={124} h={66} top={40} k="CA" out="Zone" ow={30} foot="Assembly" fw={67} />
        <Small x={1449} y={858.5} w={123.5} h={66} top={40} k="CA" out="Zone" ow={30} foot="Assembly" fw={67} />
        <Small x={1426.5} y={942} w={142} h={74} top={48} k="WU" out="Window" ow={50} foot="Unit" fw={28} />

        <div className={"absolute left-[1490px] top-[1033px] flex h-[156px] w-[135px] rounded-[4px] border-[1.5px] border-[#555] bg-linear-to-b from-[#f5f5f5] via-[#e0e0e0] to-[#c3c3c3] text-[13px] text-[#222] " + NODE}>
          <div className="flex w-[40px] flex-col items-end pt-[2px]">
            {([["Brep", 28], ["SR", 15], ["VR", 16], ["Trans", 32], ["GF", 16], ["GC", 17]] as [string, number][]).map(([t, w]) => <span key={t} className="flex h-[25px] items-center"><T w={w}>{t}</T></span>)}
          </div>
          <Spine className="my-[2px] ml-[6px] w-[31px]" label="Shade" w={50} />
          <span className="flex flex-1 items-center pl-[5px]"><T w={37}>Shade</T></span>
        </div>

        <div className={"absolute left-[1220px] top-[1071px] flex h-[26px] w-[201px] overflow-hidden rounded-[4px] border-[1.5px] border-[#444] bg-linear-to-b from-white to-[#d0d0d0] text-[13px] text-[#222] " + NODE}>
          <span className="flex w-[31px] items-center justify-center border-r border-[#444] bg-linear-to-b from-[#c9c8d6] to-[#8f8d9f]"><T w={16}>SR</T></span>
          <svg className="absolute left-[42px] top-[5px]" width="146" height="14"><path d="M.5 0v6.500h144V0M14.500 3v3M29.500 3v3M86.500 3v3M100.500 3v3M114.500 3v3M129.500 3v3" stroke="#bbb" fill="none" /></svg>
          <span className="relative flex items-center pl-[38px]"><T w={36} className="-mt-[2px] bg-[#e9e9e9] text-[14px] leading-[18px]">0.500</T></span>
          <span className="relative ml-[6px] mt-[7px] h-[10px] w-[10px] rounded-full border-[2.5px] border-black bg-white" />
        </div>

        <div className={"absolute left-[1800px] top-[733px] flex h-[431px] w-[222px] flex-col rounded-[4px] border-[1.5px] border-[#444] bg-linear-to-b from-[#f4f4f4] via-[#dcdcdc] to-[#c0c0c0] text-[13px] text-[#222] " + NODE}>
          <div className="flex h-[404px]">
            <div className="flex w-[89px] flex-col items-end pt-[2px]">
              {INPUTS.map(([t, w]) => <span key={t} className="flex h-[25.02px] shrink-0 items-center"><T w={w}>{t}</T></span>)}
            </div>
            <Spine className="mt-[2px] ml-[7px] mb-px w-[31px]" label="DIVA Thermal" w={112} />
            <div className="flex flex-col pl-[4.5px] pt-[2px]">
              {OUTPUTS.map(([t, , w]) => <span key={t} className="flex h-[57.2px] shrink-0 items-center"><T w={w}>{t}</T></span>)}
            </div>
          </div>
          <Foot h={26} label="Settings" w={56} />
        </div>

        {/* text panels */}
        <div className={panelBox + " left-[2085px] top-[469px] h-[271px] w-[447px]"}>
          <PanelHead h={23} div={33} />
          {LOG.map(([n, h, lines], i) => (
            <div key={n} className={"flex shrink-0 " + (i % 2 ? "bg-[#f4ed55]" : "")} style={{ height: h }}>
              <span className="flex w-[33px] items-center justify-end border-r border-[#d3cd4b] pr-[4px]"><T w={8}>{n}</T></span>
              <div className="flex flex-col justify-center pl-[3px]">
                {lines.map((l) => <span key={l} className="flex h-[15px] items-center"><T w={l.length * 8.24}>{l}</T></span>)}
              </div>
            </div>
          ))}
        </div>
        {PANELS.map((p, i) => (
          <div key={i} className={panelBox} style={{ left: p.x, top: p.y, width: p.r - p.x, height: p.b - p.y }}>
            {p.head && <PanelHead h={23} div={24.5} />}
            {p.rows.map(([n, t], j) => (
              <div key={n} className={"flex h-[20px] shrink-0 " + ((j + (p.head ? 0 : 1)) % 2 ? "bg-[#f4ed55]" : "")}>
                <span className="flex w-[24.5px] items-center justify-end border-r border-[#d3cd4b] pr-[5px]"><T w={n.length * 8}>{n}</T></span>
                <span className="flex items-center pl-[3px]"><T w={t.length * 8.1}>{t}</T></span>
              </div>
            ))}
            {!p.head && <span className="absolute bottom-[1px] right-0 h-[16px] w-[9px] rounded-[4px] bg-[#969234]" />}
          </div>
        ))}

        {/* navigation widget */}
        <svg className="absolute left-[2488px] top-[1316px]" width="54" height="50" viewBox="0 0 54 50">
          <defs><radialGradient id="nav"><stop offset="0" stopColor="#f2f2f2" /><stop offset="1" stopColor="#b4b4b4" /></radialGradient></defs>
          <path d="M12 36C4 22 12 7 27 5" fill="none" stroke="#000" strokeWidth="4" />
          <path d="M1 11l7-1-1 7z" stroke="#000" strokeWidth="2" />
          <circle cx="30" cy="25" r="20" fill="#fff" stroke="#444" />
          <circle cx="30" cy="25" r="18" fill="url(#nav)" stroke="#666" strokeWidth=".8" />
          <path d="M36 9l6 1-3 5zM47 31l-7 2 4 4zM24 41l-6-1 4-4zM13 19l5-3 0 6z" fill="#fff" />
        </svg>

        <div className="absolute left-[1211px] top-[1343px] flex h-[28px] w-[147px] items-center gap-[6px] border-2 border-l-0 border-black bg-linear-to-b from-[#fafafa] to-[#9d9d9d] pl-[2px]">
          <Ico n="leg" /><Ico n="scrib" s={23} /><Ico n="door" /><Ico n="hexx" s={23} /><Ico n="mat" s={23} />
        </div>
      </div>
    </div>
  );
}

function Spine({ label, w, className }: { label: string; w: number; className: string }) {
  return (
    <div className={"flex items-center justify-center rounded-[4px] border-[1.5px] border-black bg-linear-to-r from-[#4d4d4d] to-[#2e2e2e] " + className}>
      <span className={"flex -rotate-90 text-[14.5px] font-bold leading-none text-white " + NODE}><T w={w}>{label}</T></span>
    </div>
  );
}

function Foot({ h, label, w }: { h: number; label: string; w: number }) {
  return (
    <div className={"-mx-px flex shrink-0 items-center justify-center rounded-[4px] border border-black bg-linear-to-b from-[#a0a0a0] from-0% via-[#6a6a6a] via-45% to-[#303030] to-50% text-[14px] italic text-white " + NODE} style={{ height: h }}>
      <T w={w} className="-mt-[2px]">{label}</T>
    </div>
  );
}

function Small({ x, y, w, h, top, k, out, ow, foot, fw }: { x: number; y: number; w: number; h: number; top: number; k: string; out: string; ow: number; foot: string; fw: number }) {
  return (
    <div className={"absolute flex flex-col rounded-[4px] border-[1.5px] border-[#222] bg-linear-to-b from-[#d9d9e0] via-[#a3a2b4] via-25% to-[#9a98aa] text-[13px] text-[#222] " + NODE} style={{ left: x, top: y, width: w, height: h }}>
      <div className="flex items-center pl-[7px]" style={{ height: top - 1 }}>
        <T w={28}>Brep</T>
        <Spine className="ml-[6px] mr-[5px] my-px w-[31px] shrink-0 self-stretch" label={k} w={k === "CA" ? 22 : 27} />
        <T w={ow}>{out}</T>
      </div>
      <Foot h={h - top - 1} label={foot} w={fw} />
    </div>
  );
}

const Caret = ({ className = "" }: { className?: string }) => <svg className={className} width="7" height="5"><path d="M0 .5h7L3.500 4.500z" fill="#111" /></svg>;

function RibbonPanel({ label, lw, w, more = true, children }: { label: string; lw: number; w: number; more?: boolean; children: React.ReactNode }) {
  return (
    <div className="flex h-[74px] shrink-0 flex-col overflow-hidden rounded-[4px] border-[1.5px] border-[#8f8f8f] bg-linear-to-b from-[#e8e8e8] to-[#cfcfcf]" style={{ width: w }}>
      <div className="flex flex-1">{children}</div>
      <div className={"flex h-[15px] items-center bg-[#1b1b1b] text-[11.5px] text-white " + SANS + (more ? " pl-[10px]" : " pl-[2px]")}>
        <T w={lw}>{label}</T>
        {more && <svg className="ml-[13px]" width="7" height="8"><path d="M3.500 0v5M1 3.500 3.500 6.500l2.500-3" stroke="#999" strokeWidth="1.500" fill="none" /></svg>}
      </div>
    </div>
  );
}

function WinButtons({ dialog = false }: { dialog?: boolean }) {
  return (
    <div className={"flex h-[19px] overflow-hidden rounded-b-[4px] border border-t-0 " + (dialog ? "border-[#555]" : "border-[#999]")}>
      <span className={"flex w-[28px] items-center justify-center border-r border-[#888] " + (dialog ? "bg-linear-to-b from-[#ededed] from-45% to-[#c8c8c8] to-50%" : "")}><svg width="13" height="5"><rect x=".5" y=".5" width="12" height="3.500" fill="#fff" stroke="#555a70" /></svg></span>
      <span className={"flex w-[27px] items-center justify-center border-r border-[#888] " + (dialog ? "bg-linear-to-b from-[#ededed] from-45% to-[#c8c8c8] to-50%" : "")}><svg width="12" height="10"><path d="M.5.500h11v9H.5zM4 4h4v2.500H4z" fill="#fff" stroke="#555a70" /></svg></span>
      <span className={"flex w-[47px] items-center justify-center " + (dialog ? "bg-linear-to-b from-[#dfa394] from-45% to-[#c03a1e] to-50%" : "")}><svg width="13" height="11" viewBox="0 0 13 11"><path d="M.5.500h4l2 2.500 2-2.500h4L8.800 5.500l3.700 5h-4l-2-2.500-2 2.500h-4l3.700-5z" fill="#fff" stroke="#555a70" /></svg></span>
    </div>
  );
}

function Grasshopper() {
  return (
    <div className="relative flex h-[1400px] w-[1355px] shrink-0 flex-col rounded-t-lg border border-b-2 border-[#5a5a5a] bg-[#e9e9e9] shadow-[-2px_0_5px_rgba(0,0,0,.45)]">
      <div className={"flex h-[28px] shrink-0 items-start justify-between rounded-t-lg bg-linear-to-r from-[#ececec] via-[#dadada] via-30% to-[#ebebeb] pl-[6px] pr-[5px] text-[12px] text-black " + UI}>
        <T w={152} className="pt-[5px]">Grasshopper - Thermal_Sim*</T>
        <WinButtons />
      </div>
      <div className="ml-[6px] flex h-[1368px] w-[1341px] flex-col border border-[#747474] bg-[#f0f0f0]">
        <div className={"flex h-[24px] shrink-0 items-center justify-between bg-linear-to-r from-[#f2f2f2] to-[#fdfdfd] pr-[9px] text-[11.5px] text-black " + UI}>
          <Labels from={1210} items={GH_MENU} />
          <T w={65}>Thermal_Sim*</T>
        </div>
        <div className={"flex h-[22px] shrink-0 items-end text-[11.500px] text-[#6d6d6d] " + UI}>
          <Labels from={1210} items={GH_TABS} className="h-[20px]" />
          <div className="relative z-10 -mb-px ml-[9px] flex h-[23px] w-[43px] items-center justify-center rounded-t-[6px] border border-b-0 border-[#909090] bg-[#f0f0f0] pb-[2px] text-black"><T w={25}>DIVA</T></div>
          <span className="ml-[8px] flex h-[20px] items-center"><T w={26}>Extra</T></span>
        </div>
        <div className="flex h-[88px] shrink-0 gap-[4px] rounded-t-[6px] border-t border-[#a0a0a0] bg-linear-to-b from-[#d3d3d3] to-[#f0f0f0] pl-[2px] pt-[2px]">
          <RibbonPanel label="DIVA Daylight" lw={65} w={98}>
            <div className="grid w-[57px] grid-cols-2 content-center gap-y-[5px] pl-[2px]"><Ico n="nodes" /><Ico n="mat" s={23} /><Ico n="met" /></div>
            <span className="my-2 ml-[3px] w-px bg-[#b5b5b5]" />
            <Ico n="leg" className="ml-[8px] mt-[4px] h-[24px]" />
          </RibbonPanel>
          <RibbonPanel label="DIVA Thermal" lw={65} w={98}>
            <div className="grid w-[57px] grid-cols-2 content-center gap-y-[5px] pl-[2px]"><Ico n="book" /><Ico n="smoke" /><Ico n="dia" /><Ico n="win" /></div>
            <span className="my-2 ml-[3px] w-px bg-[#b5b5b5]" />
            <Ico n="rep" className="ml-[8px] mt-[4px] h-[24px]" />
          </RibbonPanel>
          <RibbonPanel label="Solar Tools" lw={53} w={61} more={false}>
            <div className="grid w-[57px] grid-cols-2 content-center gap-y-[5px]"><Ico n="sol1" /><Ico n="needle" /><Ico n="sol2" /></div>
          </RibbonPanel>
        </div>
        <div className="flex h-[32px] shrink-0 items-center border-t border-[#7a7a7a] bg-linear-to-b from-white to-[#ededed] pl-[5px] pr-[4px]">
          <Ico n="gopen" s={22} /><Ico n="gsave" s={22} className="ml-[8px]" />
          <span className="ml-[8px] h-[20px] w-px bg-[#bbb]" />
          <div className={"ml-[5px] flex h-[25px] w-[69px] items-center justify-between border border-[#d5d5dd] bg-white pl-[3px] pr-[4px] text-[12.5px] text-black " + UI}><T w={31}>125%</T><Caret /></div>
          <Ico n="fit" s={20} className="ml-[6px]" /><Caret className="ml-[4px]" />
          <Ico n="eye" className="ml-[7px]" /><Caret className="ml-[7px]" />
          <Ico n="brush" s={22} className="ml-[5px]" />
          <span className="flex-1" />
          <Ico n="tubg" s={21} /><Ico n="tubw" s={22} className="ml-[8px]" />
          <span className="ml-[4px] flex h-[28px] w-[28px] items-center justify-center border border-[#3399ff] bg-[#f0f6fc]"><Ico n="tubr" s={23} /></span>
          <span className="ml-[8px] h-[20px] w-px bg-[#bbb]" />
          <Ico n="tubgr" s={22} className="ml-[10px]" /><Ico n="half" s={21} className="ml-[7px]" />
          <span className="ml-[7px] h-[20px] w-px bg-[#bbb]" />
          <Ico n="hexb" s={20} className="ml-[6px]" /><Caret className="ml-[4px]" />
        </div>
        <Canvas />
        <div className={"flex flex-1 items-center border-t-2 border-white bg-[#fafafa] text-[11.5px] text-black " + SANS}>
          <svg className="ml-[2px]" width="17" height="17" viewBox="0 0 17 17"><circle cx="8.500" cy="8.500" r="7.800" fill="#1667b5" stroke="#0a2f66" /><path d="M8.500 3.500v6M8.500 11.500v2" stroke="#fff" strokeWidth="2.400" /></svg>
          <T w={259} className="ml-[3px]">Solution completed in ~68.2 seconds (33 seconds ago)</T>
          <span className="flex-1" />
          <T w={42} className="mr-[5px] text-[#666]">0.9.0072</T>
          <svg className="mr-[2px]" width="11" height="10" fill="#aaa"><path d="M8 0h2v2H8zM8 4h2v2H8zM8 8h2v2H8zM4 4h2v2H4zM4 8h2v2H4zM0 8h2v2H0z" /></svg>
        </div>
      </div>
    </div>
  );
}

/* --------------------------------------------------------------- Dialog */

function Dialog() {
  const tab = "flex items-center justify-center border border-[#8c8c98] border-l-0 bg-linear-to-b from-[#f2f2f2] from-45% to-[#d2d2d2]";
  return (
    <div className={"absolute left-[1381px] top-[258px] flex h-[393px] w-[514px] flex-col rounded-[7px] border-[1.5px] border-[#2a2a2a] bg-[#e8e8e8] text-[12px] text-black shadow-[0_3px_14px_4px_rgba(0,0,0,.5)] " + SANS}>
      <div className={"flex h-[28px] shrink-0 items-start rounded-t-[6px] bg-linear-to-r from-[#f8f8f8] from-40% via-[#d6d6d6] via-68% to-[#ececec] pl-[6px] pr-[5px] text-[12px] " + UI}>
        <svg className="mt-[6px]" width="17" height="17"><rect width="17" height="17" fill="#7fe04a" /><path d="M0 17v-4l3-3 3 1 1 2-2 2v2z" fill="#14330a" /><path d="M6 10l8-9M6 10l8-4" stroke="#2f7d1c" strokeWidth="1" /></svg>
        <T w={167} className="ml-[6px] mt-[6px]">DIVA: Viper Simulation Settings</T>
        <span className="flex-1" />
        <WinButtons dialog />
      </div>
      <div className="mx-[5px] flex h-[357px] flex-col border border-[#6f6f6f] bg-white">
        <div className="flex h-[21px] shrink-0 items-end pl-[1px]">
          <div className="z-10 -mb-px flex h-[21px] w-[57px] items-center justify-center border-x border-[#8c8c98] bg-white"><T w={41}>Location</T></div>
          <div className={tab + " h-[19px] w-[65px]"}><T w={55}>Occupancy</T></div>
          <div className={tab + " ml-px h-[19px] w-[115px] border-l"}><T w={104}>Simulation Parameters</T></div>
          <div className={tab + " ml-px h-[19px] w-[46px] border-l"}><T w={37}>Outputs</T></div>
        </div>
        <div className="mr-[2px] ml-[1px] flex h-[278px] shrink-0 flex-col border border-[#8c8c98] pl-[16px]">
          <div className="mt-[18px] flex h-[21px] items-center">
            <T w={101} className="text-[12.5px] font-bold">Weather Location</T>
            <div className="ml-[26px] flex h-[21px] w-[300px] items-center justify-between rounded-[2px] border border-[#707070] bg-linear-to-b from-[#f2f2f2] from-45% to-[#d0d0d0] pl-[3px] pr-[4px]"><T w={162}>CHE_Geneva.067000_IWEC.epw</T><Caret /></div>
          </div>
          <div className="ml-[130px] mt-[22px] flex flex-col text-[12.5px] italic leading-[15px] text-[#8a8a8a]">
            <T w={269}>To add more locations, place EnergyPlus weather</T>
            <T w={248}>files (.epw) in the folder C:\DIVA\WeatherData.</T>
          </div>
          <div className="ml-[129px] mt-[35px] flex flex-col leading-[13px] text-[#0000ff]">
            <T w={288} className="[&>span]:underline">http://apps1.eere.energy.gov/buildings/energyplus/weather</T>
            <T w={75} className="[&>span]:underline">data_about.cfm</T>
          </div>
        </div>
        <div className="mt-[22px] flex justify-end gap-[8px] pr-[14px]">
          <span className="flex h-[21px] w-[73px] items-center justify-center rounded-[3px] border-[1.5px] border-[#3c7fb1] bg-linear-to-b from-[#e6f5fc] from-45% to-[#a4d9f5]"><T w={16}>OK</T></span>
          <span className="flex h-[21px] w-[73px] items-center justify-center rounded-[3px] border border-[#707070] bg-linear-to-b from-[#f2f2f2] from-45% to-[#cfcfcf]"><T w={33}>Cancel</T></span>
        </div>
        <svg className="ml-auto mr-[2px] mt-[4px]" width="9" height="8" fill="#bbb"><path d="M6 0h2v2H6zM6 3h2v2H6zM6 6h2v2H6zM3 3h2v2H3zM3 6h2v2H3zM0 6h2v2H0z" /></svg>
      </div>
    </div>
  );
}

/* -------------------------------------------------------------- Taskbar */

function Taskbar() {
  return (
    <div className="flex h-[40px] w-full items-center border-t border-[#555] bg-linear-to-r from-[#b0b0b0] from-0% via-[#e6e6e6] via-4% to-[#e6e6e6] to-100%">
      <svg className="ml-[8px]" width="38" height="38" viewBox="0 0 38 38">
        <defs><radialGradient id="orb" cx=".5" cy=".85" r=".8"><stop offset="0" stopColor="#3fd0f5" /><stop offset=".5" stopColor="#1a6aa8" /><stop offset="1" stopColor="#23507c" /></radialGradient></defs>
        <circle cx="19" cy="19" r="17.500" fill="url(#orb)" stroke="#234a6b" />
        <path d="M5 12C10 2 28 2 33 12 25 18 13 18 5 12z" fill="#fff" fillOpacity=".35" />
        <path d="M11 12c3-2 5-1 7 0l-1.500 6c-2-1-4-1-7 0z" fill="#f0642c" /><path d="M19.500 12.500c3 1 5 1 8-1l-2 7c-2 2-5 1-7.500 0z" fill="#8cc63f" />
        <path d="M9 20c3-1 5-1 7 0l-1.500 6c-2-1-5-1-7 0z" fill="#39a4e8" /><path d="M17.500 20.500c3 1 5 1 8-1l-2 6.500c-2 2-5 1-7.500 0z" fill="#fcc41c" />
      </svg>
      <svg className="ml-[28px]" width="30" height="30" viewBox="0 0 30 30">
        <circle cx="15" cy="15" r="14" fill="#dd4b3e" />
        <path d="M3 8A14 14 0 0 0 13 29l6-11-4-3-6 2z" fill="#3da552" />
        <path d="M13 29A14 14 0 0 0 28 9H15l5 9z" fill="#fbcd2c" />
        <circle cx="15" cy="15" r="6.500" fill="#fff" /><circle cx="15" cy="15" r="5.200" fill="#3f7ee0" />
      </svg>
      <span className="ml-[17px] flex h-[38px] w-[55px] items-center justify-center rounded-[3px] border border-[#777] bg-linear-to-b from-white to-[#e2e2e2]"><RhinoLogo s={32} /></span>
      <span className="h-[38px] w-[5px] rounded-r-[3px] border border-l-0 border-[#888] bg-[#eee]" />
      <span className="ml-[3px] flex h-[38px] w-[59px] items-center justify-center rounded-[3px] border border-[#888] bg-linear-to-b from-[#fafafa] to-[#e4e4e4]">
        <svg width="33" height="31" viewBox="0 0 33 31">
          <path d="M1 3h10l2 2h10l2 3h7v20H1z" fill="#f3dc8a" stroke="#c39b3a" />
          <path d="M3 2h5v4H3z" fill="#3cbf3c" /><path d="M12 4h5v3h-5z" fill="#d9432c" /><path d="M20 6h6v4h-6z" fill="#3aa0e8" />
          <path d="M2 10h29v17H2z" fill="#f8e8a8" /><path d="M4 30V20h24v10h-6v-5H10v5z" fill="#8fd0ee" stroke="#3f96c4" />
        </svg>
      </span>
      <span className="flex-1" />
      <div className={"flex h-[40px] w-[318px] items-center bg-linear-to-r from-[#e6e6e6] from-0% via-[#b4b4b4] via-12% to-[#8f8f8f] to-100% pl-[81px] text-[11.500px] text-white " + UI}>
        <T w={14} className="-mt-[6px]">DE</T>
        <svg className="ml-[16px]" width="8" height="5"><path d="M0 5 4 0l4 5z" fill="#fff" stroke="#777" strokeWidth=".5" /></svg>
        <svg className="ml-[13px]" width="16" height="16" viewBox="0 0 16 16"><path d="M2 1v15M2 2h6l1 2h6l-2 6H8L7 8H2z" fill="#fff" stroke="#555" /></svg>
        <svg className="ml-[8px]" width="17" height="17" viewBox="0 0 17 17"><path d="M5 1 1 4l3 2.500L1 9l4 3 3.500-2.500L12 12l4-3-3-2.500L16 4l-4-3-3.500 2.500z" fill="#4ea4e8" stroke="#d8eeff" /><circle cx="12.500" cy="12.500" r="4" fill="#2fa84a" /><path d="M10.500 12.500l1.500 1.700 2.500-3" stroke="#fff" fill="none" strokeWidth="1.200" /></svg>
        <svg className="ml-[8px]" width="16" height="15" viewBox="0 0 16 15"><path d="M5 4h10v7H5zM7 14h6M10 11v3M1 1v4h4V1M3 5v9" fill="#888" stroke="#fff" strokeWidth="1.500" /></svg>
        <svg className="ml-[8px]" width="14" height="15" viewBox="0 0 14 15"><path d="M1 5h3l4-4v13l-4-4H1z" fill="#fff" stroke="#666" /><path d="M10 4c2 2 2 5 0 7M12 3c2 3 2 6 0 9" stroke="#fff" fill="none" /></svg>
        <div className="ml-[18px] flex w-[56px] flex-col items-center leading-[17px]"><T w={28}>10:12</T><T w={54}>22.05.2014</T></div>
        <span className="ml-auto mr-[2px] h-[39px] w-[12px] border border-[#666] bg-linear-to-b from-[#bbb] to-[#777]" />
      </div>
    </div>
  );
}

export default function App() {
  return (
    <div className="relative flex h-[1440px] w-[2560px] flex-col overflow-hidden bg-[#4c4c4c]">
      <Defs />
      <div className="flex h-[1400px]">
        <Rhino />
        <Grasshopper />
      </div>
      <Taskbar />
      <Dialog />
    </div>
  );
}
